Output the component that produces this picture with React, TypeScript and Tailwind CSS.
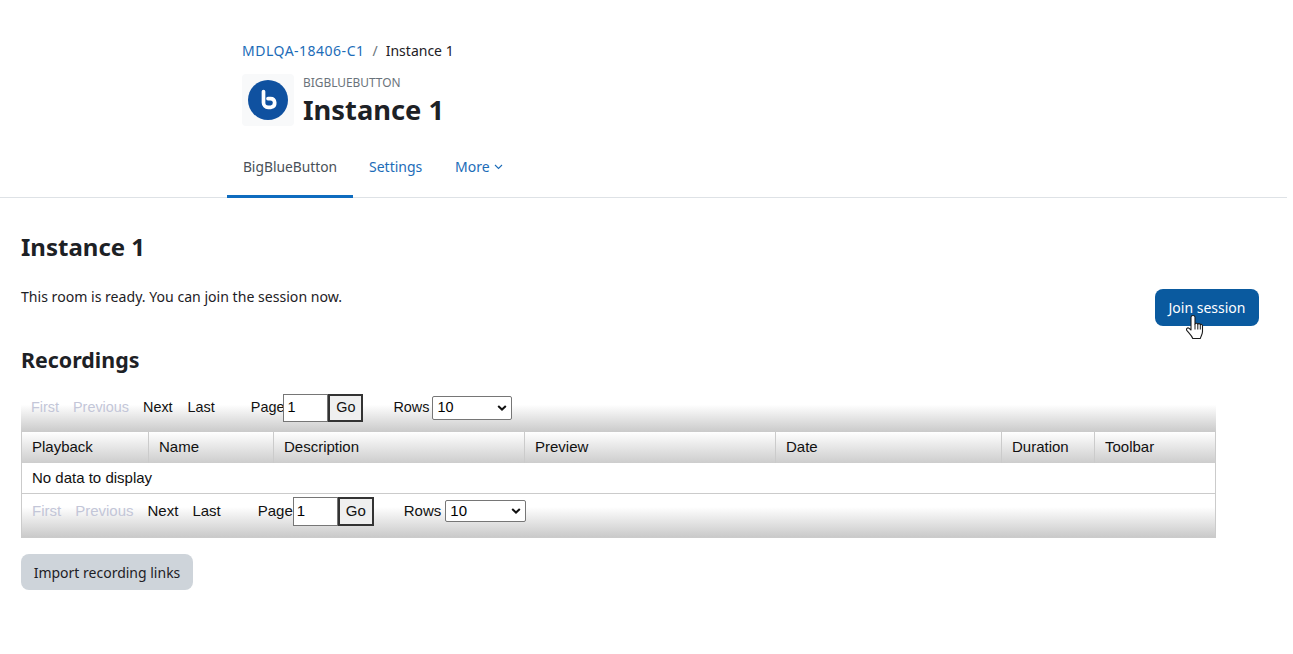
import React from "react";

function Logo() {
  return (
    <div className="w-[52px] h-[52px] bg-[#f8f9fa] rounded-[4px] flex items-center justify-center">
      <svg width="40" height="40" viewBox="0 0 40 40">
        <circle cx="20" cy="20" r="20" fill="#0f51a0" />
        <path d="M15.5 11.5v11.2a4.6 4.6 0 0 0 4.6 4.6h3a4.6 4.6 0 0 0 3.6-4.8c-.2-2.5-1.8-3.9-4.2-3.9h-2.5" fill="none" stroke="#fff" strokeWidth="3.7" strokeLinecap="round" strokeLinejoin="round" />
      </svg>
    </div>
  );
}

function Pager({ big }: { big?: boolean }) {
  return (
    <div className={`flex items-start bg-gradient-to-b from-white from-30% to-[#cacaca] font-['Liberation_Sans',sans-serif] text-[#111] ${big ? "text-[15px] h-[44px] pt-[3px] pl-[10px] border-x border-b border-[#cbcbcb]" : "text-[14.4px] h-[39px] pl-[10px]"}`}>
      <div className={`flex items-center ${big ? "h-[28px]" : "h-[29px]"}`}>
        <span className="text-[#c3c6d8]">First</span>
        <span className="text-[#c3c6d8] ml-[14px]">Previous</span>
        <span className="ml-[14px]">Next</span>
        <span className={big ? "ml-[14px]" : "ml-[15px]"}>Last</span>
        <span className={big ? "ml-[37px]" : "ml-[36px]"}>Page</span>
        <div className={`border border-[#767676] bg-white px-[3px] text-black flex items-center ${big ? "w-[45px] h-[29px]" : "w-[45px] h-[28px] -ml-[1px]"}`}>1</div>
        <div className={`border-2 border-[#333] bg-[#efefef] text-[#111] flex items-center justify-center ${big ? "w-[36px] h-[29px]" : "w-[35px] h-[28px]"}`}>Go</div>
        <span className="ml-[30px]">Rows</span>
        <div className={`relative border border-[#767676] rounded-[2px] bg-white text-black flex items-center pl-[4px] ${big ? "ml-[4px] w-[81px] h-[22px]" : "ml-[3px] w-[80px] h-[24px]"}`}>
          10
          <svg className="absolute right-[4px] top-1/2 -translate-y-1/2" width="10" height="7" viewBox="0 0 10 7">
            <path d="M1.2 1.4 5 5 8.8 1.4" fill="none" stroke="#111" strokeWidth="2" />
          </svg>
        </div>
      </div>
    </div>
  );
}

const columns: [string, string][] = [
  ["Playback", "w-[127px]"],
  ["Name", "w-[125px]"],
  ["Description", "w-[251px]"],
  ["Preview", "w-[251px]"],
  ["Date", "w-[226px]"],
  ["Duration", "w-[93px]"],
  ["Toolbar", "flex-1"],
];

export default function App() {
  return (
    <div className="w-[1287px] bg-white text-[#1d2125] font-['Noto_Sans',sans-serif] text-[14px]">
      <div className="pl-[242px] pt-[40px] h-[146px]">
        <div className="flex items-center h-[20px] text-[14px]">
          <span className="text-[#1c6cb8] tracking-[0.5px]">MDLQA-18406-C1</span>
          <span className="text-[#6a737b] mx-[8px]">/</span>
          <span>Instance 1</span>
        </div>
        <div className="flex mt-[14px]">
          <Logo />
          <div className="ml-[9px]">
            <div className="text-[11.9px] text-[#6a737b] leading-[16px]">BIGBLUEBUTTON</div>
            <h1 className="text-[27.3px] font-bold leading-[36px] text-[#1d2125] mt-[2px]">Instance 1</h1>
          </div>
        </div>
      </div>
      <nav className="flex pl-[227px] h-[52px] border-b border-[#dee2e6] text-[14px]">
        <div className="h-[52px] w-[126px] border-b-[3px] border-[#0f6cbf] pt-[11px] text-center text-[#495057] leading-[20px] text-[13.8px]">BigBlueButton</div>
        <div className="ml-[16px] pt-[11px] text-[#1c6cb8] leading-[20px] w-[70px]">Settings</div>
        <div className="ml-[16px] pt-[11px] text-[#1c6cb8] leading-[20px] flex items-start">
          More
          <svg className="ml-[4px] mt-[7px]" width="9" height="6" viewBox="0 0 9 6">
            <path d="M1 1 4.5 4.5 8 1" fill="none" stroke="#1c6cb8" strokeWidth="1.1" />
          </svg>
        </div>
      </nav>
      <main className="pl-[21px] pr-[28px]">
        <h2 className="text-[24px] font-bold leading-[32px] mt-[33px]">Instance 1</h2>
        <div className="flex justify-between items-start mt-[9px] h-[69px]">
          <p className="text-[14.1px] leading-[20px] mt-[15px]">This room is ready. You can join the session now.</p>
          <div className="relative mt-[17px] w-[104px] h-[37px] bg-[#0a5a9f] rounded-[8px] text-white flex items-center justify-center">
            Join session
            <svg className="absolute left-[31px] top-[26px]" width="18" height="24" viewBox="0 0 18 24">
              <path d="M5 2.2c0-2.2 4-2.2 4 0v7c.4-1.3 2.6-1.2 2.8.2.4-1.1 2.3-1 2.5.3.5-.7 2.2-.4 2.2 1v5.8c0 2.8-1.6 4.4-2.2 7H6.8C5.8 20.6 3.6 18.6 1 15.6c-1.4-1.8.6-3.6 2.2-2.2L5 15z" fill="#fff" stroke="#1a1a1a" strokeWidth="1.1" strokeLinejoin="round" />
              <path d="M9 9.2v5.3M11.8 9.4v5.1M14.3 9.7v4.8" stroke="#1a1a1a" strokeWidth="1" fill="none" />
            </svg>
          </div>
        </div>
        <h3 className="text-[21.4px] font-bold leading-[28px] mt-[5px]">Recordings</h3>
        <div className="w-[1195px] mt-[19px]">
          <Pager />
          <div className="font-['Liberation_Sans',sans-serif] text-[15px] text-[#111]">
            <div className="flex h-[31px] border-x border-[#cbcbcb] bg-gradient-to-b from-white to-[#cdcdcd]">
              {columns.map(([c, w], i) => (
                <div key={c} className={`${w} ${i < 6 ? "border-r border-[#cbcbcb]" : ""} pl-[10px] flex items-center`}>{c}</div>
              ))}
            </div>
            <div className="h-[31px] flex items-center pl-[10px] border-x border-b border-[#cbcbcb]">No data to display</div>
          </div>
          <Pager big />
        </div>
        <div className="mt-[16px] w-[172px] h-[36px] rounded-[8px] bg-[#ced4da] text-[#1d2125] flex items-center justify-center">Import recording links</div>
      </main>
    </div>
  );
}
